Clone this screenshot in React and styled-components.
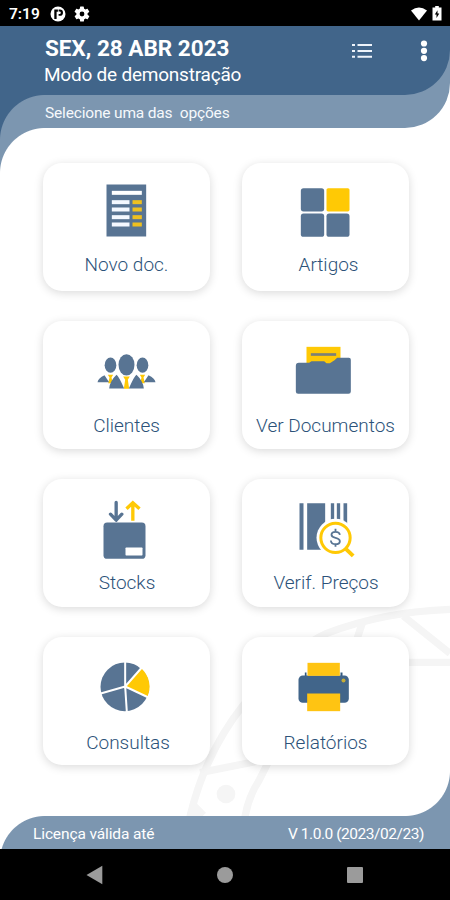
import styled, { createGlobalStyle } from 'styled-components'

const BLUE = '#41658a'
const SLATE = '#7c96b0'
const STEEL = '#587493'
const YELLOW = '#ffc905'

const GlobalStyle = createGlobalStyle`
* {
    box-sizing: border-box;
}
body {
    margin: 0;
    background: #000;
    font-family: Roboto, "Liberation Sans", sans-serif;
}
`

const options = [
  { label: 'Novo doc.', Icon: DocIcon, box: '169.5 85.5 240 204', top: 6, shift: 0 },
  { label: 'Artigos', Icon: GridIcon, box: '166.5 85.5 240 204', top: 6, shift: 6 },
  { label: 'Clientes', Icon: PeopleIcon, box: '169.5 79.5 240 204', top: 9, shift: 0 },
  { label: 'Ver Documentos', Icon: FolderIcon, box: '166.5 79.5 240 204', top: 9, shift: 0 },
  { label: 'Stocks', Icon: StockIcon, box: '169.5 73.5 240 204', top: 8, shift: 1 },
  { label: 'Verif. Preços', Icon: PriceIcon, box: '166.5 73.5 240 204', top: 8, shift: 1 },
  { label: 'Consultas', Icon: PieIcon, box: '169.5 67.5 240 204', top: 10, shift: 3 },
  { label: 'Relatórios', Icon: PrinterIcon, box: '166.5 67.5 240 204', top: 10, shift: 0 },
]

const App = () => {
  return (
    <>
      <GlobalStyle />
      <Screen>
        <StatusBar>
          <Clock>7:19</Clock>
          <svg width="16" height="16" viewBox="0 0 16 16">
            <circle cx="8" cy="8" r="7.5" fill="#fff" />
            <path d="M4.3 3.6h3.6v2.2H6.6v7.3H4.3zM8.600 3.6h1.300a3.1 3.1 0 0 1 0 6.2H8.600V7.9h1a1.2 1.2 0 0 0 0-2.4h-1z" fill="#000" />
          </svg>
          <Gear width="18" height="18" viewBox="0 0 24 24">
            <path fill="#fff" fillRule="evenodd" d="M19.4 13a7.8 7.8 0 0 0 0-2l2.1-1.6c.2-.2.3-.5.1-.7l-2-3.4c-.1-.2-.4-.3-.6-.2l-2.5 1a7 7 0 0 0-1.7-1l-.4-2.6a.5.5 0 0 0-.5-.5h-4a.5.5 0 0 0-.5.5L9 5.1a7 7 0 0 0-1.7 1l-2.500-1c-.2-.1-.5 0-.6.2l-2 3.400c-.1.200-.1.500.1.700L4.500 11a7.800 7.800 0 0 0 0 2l-2.100 1.600c-.2.200-.3.500-.1.700l2 3.400c.1.200.4.300.6.200l2.500-1a7 7 0 0 0 1.700 1l.4 2.600c0 .3.2.5.5.5h4c.2 0 .5-.2.500-.5l.4-2.600a7 7 0 0 0 1.700-1l2.500 1c.2.1.5 0 .6-.2l2-3.400c.1-.2.1-.5-.1-.7zM12 15.200a3.200 3.200 0 1 1 0-6.400 3.200 3.200 0 0 1 0 6.400z" />
          </Gear>
          <Spacer />
          <svg width="18" height="14" viewBox="0 0 18 14">
            <path d="M1 3.500Q9-2.500 17 3.500L9 13.500z" fill="#fff" />
          </svg>
          <Battery width="10" height="15" viewBox="0 0 10 15">
            <path d="M3.200 0h3.600v1.600H9.500V14.500H.5V1.600h2.700z" fill="#fff" />
            <path d="M5.500 4.200v3.200h1.800L4.500 12V8.600H2.800z" fill="#000" />
          </Battery>
        </StatusBar>
        <Hero>
          <TopBar>
            <Titles>
              <DateLine>SEX, 28 ABR 2023</DateLine>
              <Mode>Modo de demonstração</Mode>
            </Titles>
            <ListIcon width="22" height="16" viewBox="0 0 22 16">
              <path d="M1 2h3M1 8h3M1 13.700h3M6.500 2H21M6.500 8H21M6.500 13.700H21" stroke="#eef4fb" strokeWidth="2" />
            </ListIcon>
            <MoreIcon width="8" height="22" viewBox="0 0 8 22">
              <circle cx="4" cy="3.500" r="3.100" fill="#fff" />
              <circle cx="4" cy="10.800" r="3.100" fill="#fff" />
              <circle cx="4" cy="18.100" r="3.100" fill="#fff" />
            </MoreIcon>
          </TopBar>
          <Hint>Selecione uma das  opções</Hint>
        </Hero>
        <Main>
          <Watermark width="270" height="226" viewBox="0 0 810 678">
            <g fill="none" stroke="#f5f5f5" strokeWidth="22">
              <path d="M30 680Q75 490 190 345Q330 180 440 130Q610 65 810 58" />
              <path d="M60 548L270 506L238 570Q205 620 195 680" />
              <path d="M550 90L530 150M670 78L810 190M680 217H810" />
            </g>
            <path d="M38 628L78 668L68 678H20z" fill="#f5f5f5" />
            <circle cx="138" cy="612" r="28" fill="#f5f5f5" />
          </Watermark>
          <Options>
            {options.map(({ label, Icon, box, top, shift }) => (
              <Card key={label}>
                <svg width="80" height="68" viewBox={box}>
                  <Icon />
                </svg>
                <Label top={top} shift={shift}>{label}</Label>
              </Card>
            ))}
          </Options>
        </Main>
        <Footer>
          <License>Licença válida até</License>
          <Version>V 1.0.0 (2023/02/23)</Version>
        </Footer>
        <NavBar>
          <svg width="18" height="20" viewBox="0 0 18 20"><path d="M.5 10L16.300 .8V19.200z" fill="#9b9b9b" /></svg>
          <svg width="18" height="18" viewBox="0 0 18 18"><circle cx="9" cy="9" r="8" fill="#9b9b9b" /></svg>
          <svg width="18" height="18" viewBox="0 0 18 18"><rect x="1" y="1" width="16" height="16" rx="1" fill="#9b9b9b" /></svg>
        </NavBar>
      </Screen>
    </>
  )
}
export default App;

function DocIcon() {
  return (
    <>
      <rect x="228" y="102" width="119" height="156" fill={STEEL} />
      <rect x="244" y="121" width="90" height="12" fill="#fff" />
      {[149, 171, 194, 216].map((y) => (
        <g key={y}>
          <rect x="244" y={y} width="53" height="12" fill="#f4f8ff" />
          <rect x="306" y={y} width="28" height="12" fill="#efc01f" />
        </g>
      ))}
    </>
  )
}

function GridIcon() {
  return (
    <>
      <rect x="211" y="113" width="70" height="70" rx="8" fill={STEEL} />
      <rect x="288" y="113" width="69" height="70" rx="5" fill={YELLOW} />
      <rect x="211" y="189" width="70" height="70" rx="8" fill={STEEL} />
      <rect x="288" y="189" width="69" height="70" rx="8" fill={STEEL} />
    </>
  )
}

function PeopleIcon() {
  return (
    <>
      <path d="M232 193H248L243 201L247 218H233L237 201zM328 193H344L339 201L343 218H329L333 201z" fill={YELLOW} />
      <path d="M278 198H298L292 208L296 235H280L284 208z" fill={YELLOW} />
      <g fill={STEEL}>
        <ellipse cx="240" cy="164" rx="17.500" ry="23" />
        <ellipse cx="336" cy="164" rx="17.500" ry="23" />
        <ellipse cx="288" cy="163" rx="24" ry="32" />
        <path d="M201 215Q203 203 222 194L236 215zM375 215Q373 203 354 194L340 215z" />
        <path d="M236 234Q238 212 258 193Q264 196 281 234zM340 234Q338 212 318 193Q312 196 295 234z" />
      </g>
    </>
  )
}

function FolderIcon() {
  return (
    <>
      <rect x="228" y="109" width="102" height="55" fill={YELLOW} />
      <path d="M241 132H317" stroke="#7b8078" strokeWidth="8" />
      <path d="M205 157H236L243 152H281L288 158H298L312 149L320 142H355Q361 142 361 148V243Q361 250 354 250H203Q196 250 196 243V166Q196 157 205 157z" fill={STEEL} />
    </>
  )
}

function StockIcon() {
  return (
    <>
      <path d="M257 96V148M240 131L257 149L274 131" fill="none" stroke={STEEL} strokeWidth="10" strokeLinecap="round" strokeLinejoin="round" />
      <path d="M307 151V99M288 115L307 97L327 115" fill="none" stroke={YELLOW} strokeWidth="10" />
      <rect x="219" y="156" width="126" height="109" rx="11" fill={STEEL} />
      <rect x="285" y="231" width="51" height="24" rx="2" fill="#fff" />
    </>
  )
}

function PriceIcon() {
  return (
    <>
      <path d="M207 98H219V238H207zM230 98H284V238H230zM301 98H311V170H301zM319 98H329V170H319zM339 98H350V190H339z" fill={STEEL} />
      <circle cx="315" cy="202" r="57" fill="#fff" />
      <path d="M346 235L368 256" stroke={YELLOW} strokeWidth="12" />
      <circle cx="315" cy="202" r="44" fill="#fff" stroke={YELLOW} strokeWidth="9" />
      <path d="M315 175V184M315 220V229M328 193Q327 184 315 184Q303 184 303 193Q303 200 315 202Q328 205 328 212Q328 221 315 221Q302 221 301 210" fill="none" stroke={STEEL} strokeWidth="5.500" />
    </>
  )
}

function PieIcon() {
  return (
    <>
      <circle cx="283" cy="169" r="73" fill={STEEL} />
      <path d="M284 168L332 113A74 74 0 0 1 350 200z" fill={YELLOW} />
      <path d="M284 94V168L334 111M284 168L354 201M284 168L289 244M284 168L208 190" fill="none" stroke="#fff" strokeWidth="6" />
    </>
  )
}

function PrinterIcon() {
  return (
    <>
      <path d="M223 126H336V145H223z" fill="#31587f" />
      <rect x="204" y="135" width="151" height="82" rx="13" fill={BLUE} />
      <path d="M228 97H330V135H228z" fill="#fff" />
      <rect x="231" y="97" width="97" height="39" fill="#ffc412" />
      <rect x="230" y="189" width="99" height="53" fill="#ffc412" />
      <circle cx="339" cy="150" r="6" fill="#c5ac38" />
    </>
  )
}

const Screen = styled.div`
width: 450px;
height: 900px;
display: flex;
flex-direction: column;
background: #fff;
overflow: hidden;
`
const StatusBar = styled.div`
height: 26px;
flex: none;
display: flex;
align-items: center;
padding: 1px 8px 0 9px;
background: #000;
color: #fff;
`
const Clock = styled.div`
width: 41px;
font-size: 15.5px;
font-weight: 600;
line-height: 20px;
`
const Gear = styled.svg`
margin-left: 7px;
`
const Spacer = styled.div`
flex: 1;
`
const Battery = styled.svg`
margin-left: 4px;
`
const Hero = styled.header`
position: relative;
z-index: 1;
flex: none;
background: ${SLATE};
border-bottom-right-radius: 45px;
&::after {
    content: "";
    position: absolute;
    left: 0;
    top: 100%;
    width: 45px;
    height: 45px;
    background: radial-gradient(circle at 100% 100%, transparent 44.5px, ${SLATE} 45.5px);
}
`
const TopBar = styled.div`
position: relative;
z-index: 1;
display: flex;
height: 69px;
background: ${BLUE};
border-bottom-right-radius: 45px;
&::after {
    content: "";
    position: absolute;
    left: 0;
    top: 100%;
    width: 45px;
    height: 45px;
    background: radial-gradient(circle at 100% 100%, transparent 44.5px, ${BLUE} 45.5px);
}
`
const Titles = styled.div`
width: 351px;
padding: 9px 0 0 44px;
color: #fff;
white-space: nowrap;
`
const DateLine = styled.div`
padding-left: 1px;
font-size: 22.5px;
font-weight: 700;
line-height: 27px;
`
const Mode = styled.div`
font-size: 19px;
line-height: 26px;
letter-spacing: -0.22px;
`
const ListIcon = styled.svg`
margin-top: 17px;
`
const MoreIcon = styled.svg`
margin: 14px 0 0 47px;
`
const Hint = styled.div`
height: 33px;
padding-left: 45px;
font-size: 15.5px;
line-height: 36px;
letter-spacing: -0.17px;
color: #f6f9fc;
white-space: pre;
`
const Main = styled.main`
position: relative;
flex: 1;
padding: 34.5px 41px 0 43px;
`
const Watermark = styled.svg`
position: absolute;
right: 0;
bottom: 0;
`
const Options = styled.div`
position: relative;
display: grid;
grid-template-columns: 167px 167px;
grid-auto-rows: 128px;
gap: 30px 32px;
`
const Card = styled.div`
display: flex;
flex-direction: column;
align-items: center;
padding-top: 16px;
background: #fff;
border-radius: 19px;
box-shadow: 0 2px 10px rgba(0, 0, 0, 0.15);
`
const Label = styled.div`
margin-top: ${({top})=>top}px;
padding-left: ${({shift})=>shift}px;
font-size: 19px;
font-weight: 300;
line-height: 24px;
color: #2c5279;
white-space: nowrap;
`
const Footer = styled.footer`
position: relative;
flex: none;
display: flex;
justify-content: space-between;
height: 33px;
padding: 0 26px 0 33px;
font-size: 15.5px;
line-height: 37px;
color: #fff;
background:
    radial-gradient(circle at 45px 45px, ${SLATE} 44.5px, transparent 45.5px) 0 0 / 45px 33px no-repeat,
    linear-gradient(${SLATE}, ${SLATE}) 45px 0 no-repeat;
&::before {
    content: "";
    position: absolute;
    right: 0;
    bottom: 100%;
    width: 45px;
    height: 45px;
    background: radial-gradient(circle at 0 0, transparent 44.5px, ${SLATE} 45.5px);
}
`
const License = styled.div`
letter-spacing: -0.12px;
`
const Version = styled.div`
letter-spacing: -0.45px;
`
const NavBar = styled.nav`
height: 51px;
flex: none;
display: flex;
align-items: center;
justify-content: space-between;
padding: 0 86px;
background: #000;
`
